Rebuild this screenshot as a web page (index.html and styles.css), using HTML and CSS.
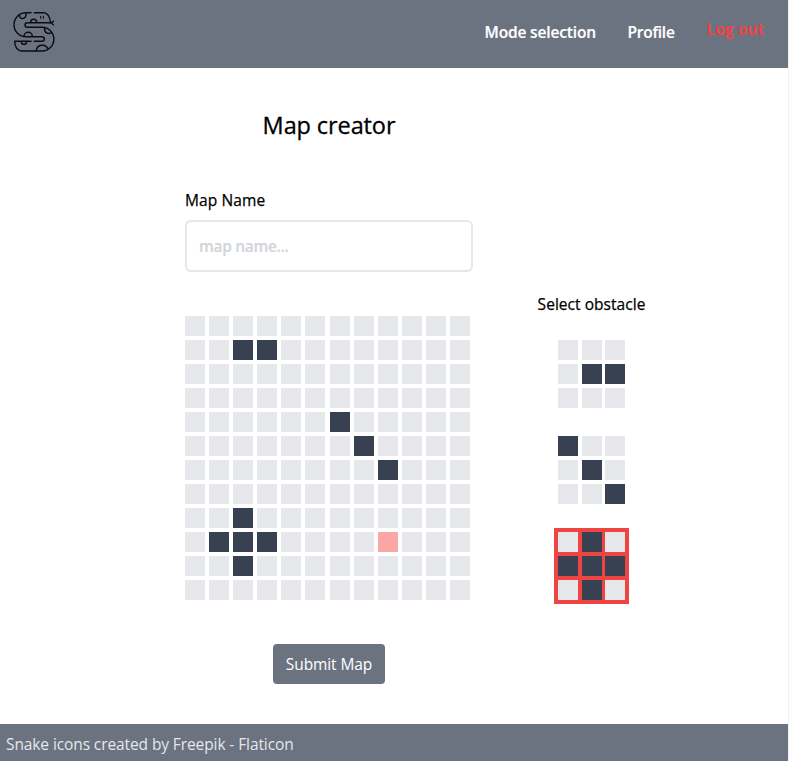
FILE: index.html
```html
<!DOCTYPE html>
<html lang="en">
<head>
<meta charset="utf-8">
<title>Map creator</title>
<link rel="stylesheet" href="styles.css">
</head>
<body>
<div class="page">
  <header class="header">
    <svg class="logo" viewBox="39 33 126 126" fill="none" stroke="#0b0d11" stroke-width="4.3" stroke-linecap="round" stroke-linejoin="round">
      <path d="M103 38H132C144 40 150 53 152 68H82a7 7 0 0 0 0 14H126A35.500 35.500 0 0 1 126 153H66C52 153 44 140 44 124H93M103 124H126a7 7 0 0 0 0-14H78A36 36 0 0 1 78 38H93"/>
      <path d="M152 69h3l5-5M155 69l5 5M58 44C58 61 78 60 79 39M92 67a9 9 0 0 1 18 0M134 84C132 99 145 104 155 98M72 109a12 12 0 0 1 25 0M64 125a8 8 0 0 0 16 0M109 152a18 18 0 0 1 35-4"/>
      <path d="M122 49v6M130 49v6" stroke-width="3"/>
    </svg>
    <nav class="nav">
      <a class="mode">Mode selection</a>
      <a class="profile">Profile</a>
      <a class="logout">Log out</a>
    </nav>
  </header>
  <main class="main">
    <section class="editor">
      <h1 class="title"><span>Map creator</span></h1>
      <label class="label" for="name"><span>Map Name</span></label>
      <input class="input" id="name" placeholder="map name...">
      <div class="grid board" data-size="12" data-filled="14 15 54 67 80 98 109 110 111 122" data-invalid="116"></div>
      <button class="submit"><span>Submit Map</span></button>
    </section>
    <aside class="obstacles">
      <h2 class="subtitle"><span>Select obstacle</span></h2>
      <div class="grid shape" data-size="3" data-filled="4 5"></div>
      <div class="grid shape" data-size="3" data-filled="0 4 8"></div>
      <div class="grid shape selected" data-size="3" data-filled="1 3 4 5 7"></div>
    </aside>
  </main>
  <footer class="footer"><span>Snake icons created by Freepik - Flaticon</span></footer>
</div>
<script src="grids.js"></script>
</body>
</html>
```

FILE: styles.css
```css
* { box-sizing: border-box; }
body {
  margin: 0;
  background: #f0f0f0;
  color: #000;
  font: 400 15.5px/24px "Open Sans", "Noto Sans", sans-serif;
  overflow: hidden;
}
.page { width: 788px; height: 761px; display: flex; flex-direction: column; background: #fff; }
.page span, .nav a { white-space: nowrap; }
.header { height: 68px; flex: none; display: flex; justify-content: space-between; padding: 11px 22.5px 0 13px; background: #6b7280; }
.logo { width: 42px; height: 42px; }
.nav { display: flex; gap: 32px; padding-top: 9px; font-weight: 600; color: #fff; }
.mode { width: 111px; letter-spacing: -.15px; -webkit-text-stroke: .2px; }
.profile { width: 47px; letter-spacing: -.25px; -webkit-text-stroke: .2px; }
.logout { width: 59px; margin-top: -3px; color: #ef4444; font-weight: 700; }
.main { flex: 1; display: flex; align-items: flex-start; padding-left: 185px; }
.editor { width: 288px; display: flex; flex-direction: column; padding-top: 41px; }
.title { margin: 0; font-size: 23.5px; line-height: 32px; font-weight: 500; text-align: center; letter-spacing: -.1px; -webkit-text-stroke: .3px; }
.label { margin-top: 47px; font-weight: 500; letter-spacing: .1px; -webkit-text-stroke: .25px; }
.input {
  width: 288px; height: 52px; margin-top: 8px; padding: 0 12px;
  border: 2px solid #e5e7eb; border-radius: 6px; background: #fff;
  font: 600 15.5px/24px "Open Sans", sans-serif; letter-spacing: -.3px;
}
.input::placeholder { color: #d1d5db; opacity: 1; -webkit-text-stroke: .2px; }
.grid { display: grid; }
.cell { width: 20px; height: 20px; background: #e5e7eb; }
.filled { background: #374151; }
.invalid { background: #fca5a5; }
.board { margin-top: 44px; grid-template-columns: repeat(5, 24px) 25px repeat(5, 24px) 20px; grid-auto-rows: 20px; row-gap: 4px; }
.submit {
  width: 112px; height: 40px; margin-top: 44px; padding: 0; align-self: center;
  border: 0; border-radius: 4px; background: #6b7280; color: #fff;
  font: 400 15.5px/24px "Open Sans", sans-serif; letter-spacing: -.1px;
}
.obstacles { width: 108px; margin-left: 64px; padding-top: 224px; display: flex; flex-direction: column; align-items: center; }
.subtitle { margin: 0 0 20px; padding-left: 1px; font-size: 15.5px; line-height: 24px; font-weight: 500; letter-spacing: .04px; -webkit-text-stroke: .25px; }
.shape { width: 75px; height: 76px; padding: 4px; margin-bottom: 20px; grid-template-columns: 24px 23px 20px; grid-auto-rows: 20px; row-gap: 4px; }
.selected { background: #ef4444; }
.footer { height: 37px; flex: none; padding: 8px 6px 0; background: #6b7280; color: #e5e7eb; letter-spacing: -.1px; }
```

FILE: grids.js
```js
document.querySelectorAll(".grid").forEach((grid) => {
  const size = Number(grid.dataset.size);
  const filled = new Set(grid.dataset.filled.split(" ").map(Number));
  const invalid = Number(grid.dataset.invalid ?? -1);
  for (let i = 0; i < size * size; i++) {
    const cell = document.createElement("div");
    cell.className = "cell" + (filled.has(i) ? " filled" : "") + (i === invalid ? " invalid" : "");
    grid.append(cell);
  }
});
```
